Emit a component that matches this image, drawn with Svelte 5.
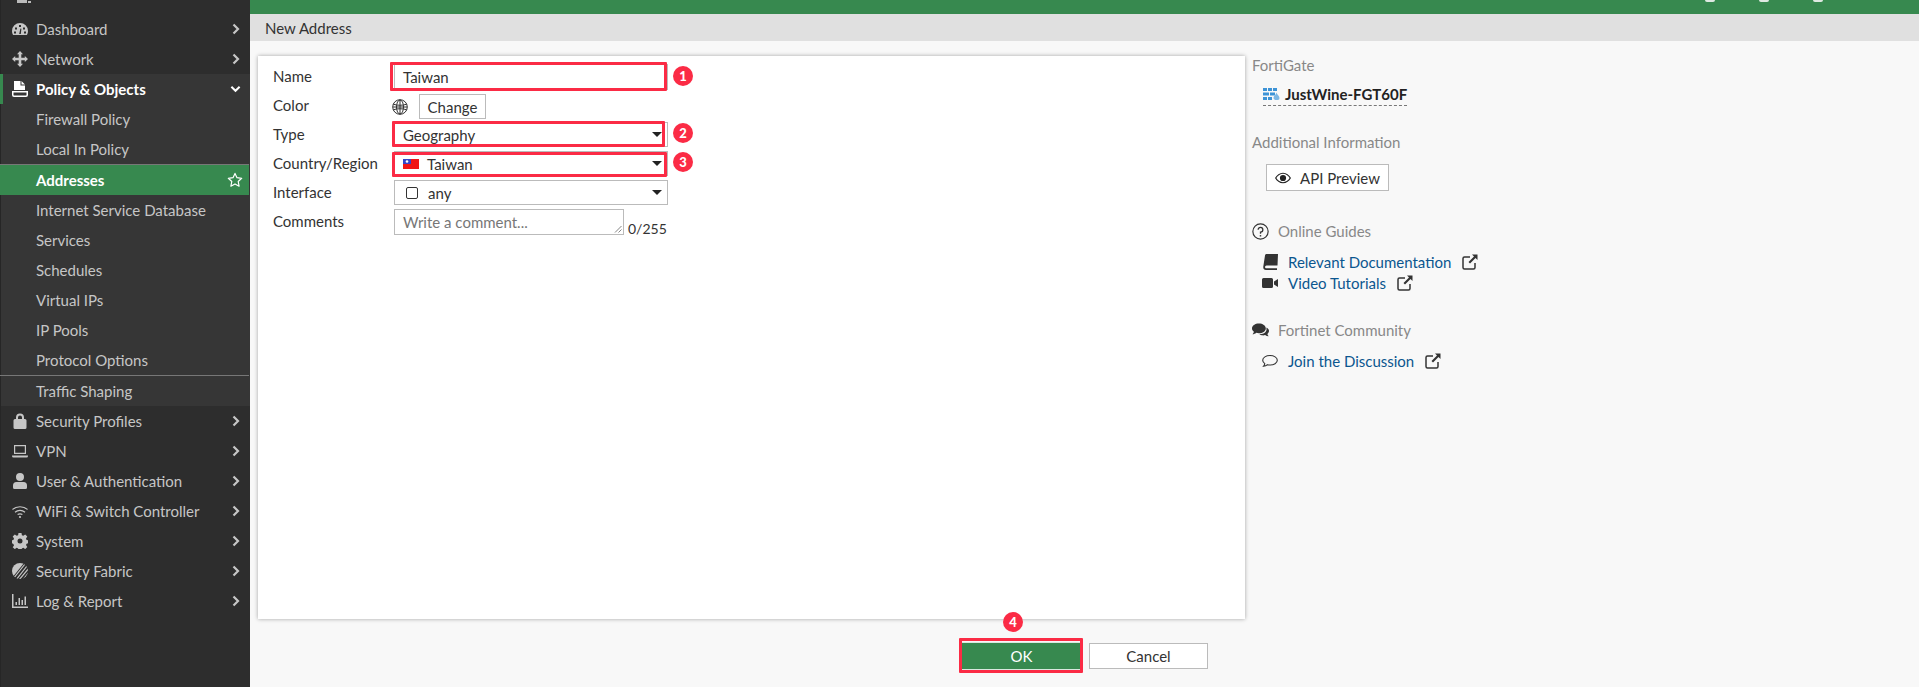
<script lang="ts">
  const icons: Record<string, string> = {
    dashboard: "M8 2a8 8 0 0 0-8 8c0 1.600.5 3 1.200 4h13.600c.7-1 1.200-2.400 1.200-4a8 8 0 0 0-8-8zM7 4h2v2H7zM3 6.500h2v2H3zM2 10.500h2v2H2zM12 10.500h2v2h-2zM11 6.500h2v2h-2zM7.200 13l1.200-5.500 1 .2L8.800 13z",
    network: "M8 0l3 3.200H9.300v3.500h3.500V5l3.200 3-3.200 3V9.300H9.300v3.500H11L8 16l-3-3.200h1.700V9.300H3.200V11L0 8l3.200-3v1.700h3.500V3.200H5z",
    policy: "M2 0h6.500v4.500H13V9H2zM9.500 0L13 3.500H9.500z M0 10h16v4a2 2 0 0 1-2 2H2a2 2 0 0 1-2-2zM1.500 11.500V14c0 .3.2.5.5.5h12c.3 0 .5-.2.5-.5v-2.500z",
    lock: "M4 6V4.500a4 4 0 0 1 8 0V6h1a1.500 1.500 0 0 1 1.500 1.500v7A1.500 1.500 0 0 1 13 16H3a1.500 1.500 0 0 1-1.500-1.500v-7A1.500 1.500 0 0 1 3 6zM6 6h4V4.500a2 2 0 0 0-4 0z",
    vpn: "M2 2h12v9H2zM3.200 3.200v6.600h9.600V3.200zM0 12.500h16V13a1.500 1.500 0 0 1-1.500 1.500h-13A1.500 1.500 0 0 1 0 13z",
    user: "M8 0a4 4 0 1 1 0 8 4 4 0 0 1 0-8zM4.500 9h7A3.500 3.500 0 0 1 15 12.500V14.500A1.500 1.500 0 0 1 13.500 16h-11A1.500 1.500 0 0 1 1 14.500V12.500A3.500 3.500 0 0 1 4.500 9z",
    gear: "M6.500 0h3l.4 2.200 1.400.6 1.900-1.300 2.100 2.100L14 5.500l.6 1.400 1.400.4v3l-1.400.4-.6 1.400 1.300 1.900-2.100 2.100-1.900-1.300-1.400.6-.4 1.600h-3l-.4-1.600-1.400-.6-1.900 1.300L.7 14.300 2 12.400l-.6-1.400L0 10.300v-3l1.400-.4.6-1.400L.7 3.600l2.100-2.100 1.900 1.300 1.400-.6zM8 5.500a2.500 2.500 0 1 0 0 5 2.500 2.500 0 0 0 0-5z",
    report: "M0 1h1.500v12.500H16V15H0zM3.500 9H5v3H3.500zM6.500 5H8v7H6.500zM9.500 7H11v5H9.500zM12.500 3.500H14V12h-1.500z",
    book: "M4.500 0H16l-.5 11.500H4.500A1.500 1.500 0 0 0 3 13c0 .8.7 1.300 1.500 1.300H15V16H4C2 16 1 14.500 1.300 12.500L3 1.500C3.100.6 3.700 0 4.500 0z",
    video: "M1.500 3h8A1.500 1.500 0 0 1 11 4.500v7A1.500 1.500 0 0 1 9.500 13h-8A1.500 1.500 0 0 1 0 11.500v-7A1.500 1.500 0 0 1 1.500 3zM12 6.500L16 4v8l-4-2.500z",
    chat: "M6.500 1.500C10 1.500 13 3.500 13 6s-3 4.500-6.500 4.500c-.9 0-1.700-.1-2.500-.4C3 11 1.800 11.500.5 11.500c.7-.8 1.200-1.600 1.300-2.400C.7 8.300 0 7.200 0 6c0-2.500 3-4.500 6.500-4.500zM14 5.500c1.300.7 2 1.800 2 3 0 1.100-.6 2-1.500 2.800.1.800.6 1.600 1.300 2.200-1.300 0-2.500-.4-3.500-1.200-.9.300-2 .4-3 .2-1-.2-1.800-.5-2.500-1 4 .3 7.800-2 6.700-6z",
  };

  const rows = [
    { label: "Dashboard", icon: "dashboard" },
    { label: "Network", icon: "network" },
  ];
  const subRows = [
    "Firewall Policy",
    "Local In Policy",
    "Addresses",
    "Internet Service Database",
    "Services",
    "Schedules",
    "Virtual IPs",
    "IP Pools",
    "Protocol Options",
    "Traffic Shaping",
  ];
  const lowerRows = [
    { label: "Security Profiles", icon: "lock" },
    { label: "VPN", icon: "vpn" },
    { label: "User & Authentication", icon: "user" },
    { label: "WiFi & Switch Controller", icon: "wifi" },
    { label: "System", icon: "gear" },
    { label: "Security Fabric", icon: "fabric" },
    { label: "Log & Report", icon: "report" },
  ];
</script>

{#snippet chevron()}
  <svg class="chev" viewBox="0 0 8 12" aria-hidden="true"><path d="M1.500 1.500L6 6l-4.500 4.500" fill="none" stroke="currentColor" stroke-width="2.200" /></svg>
{/snippet}

{#snippet navIcon(name: string)}
  {#if name === "wifi"}
    <svg class="nav-icon" viewBox="0 0 16 16" aria-hidden="true">
      <path d="M.5 6.500C4.500 2.800 11.500 2.800 15.500 6.500M3 9.200c2.900-2.500 7.100-2.500 10 0M5.600 11.600c1.500-1 3.300-1 4.800 0" fill="none" stroke="currentColor" stroke-width="1.200" />
      <circle cx="8" cy="14" r="1.100" fill="currentColor" />
    </svg>
  {:else if name === "fabric"}
    <svg class="nav-icon" viewBox="0 0 16 16" aria-hidden="true">
      <clipPath id="fabric-disc"><circle cx="8" cy="8" r="8" /></clipPath>
      <g clip-path="url(#fabric-disc)">
        <path d="M0 0h12L0 15z" fill="currentColor" />
        <path d="M13 1L1 16M15 3L4 17M17 5L7 17M18 8L10 18" fill="none" stroke="currentColor" stroke-width="1.200" />
      </g>
    </svg>
  {:else}
    <svg class="nav-icon" viewBox="0 0 16 16" aria-hidden="true"><path d={icons[name]} fill="currentColor" fill-rule="evenodd" /></svg>
  {/if}
{/snippet}

{#snippet external()}
  <svg class="ext" viewBox="0 0 16 16" aria-hidden="true">
    <path d="M8 3H2.500A1.500 1.500 0 0 0 1 4.500v9A1.500 1.500 0 0 0 2.500 15h9a1.500 1.500 0 0 0 1.500-1.500V9" fill="none" stroke="currentColor" stroke-width="1.500" />
    <path d="M10 0.500h5.500V6L13.500 4 8 9.500 6.500 8 12 2.500z" fill="currentColor" />
  </svg>
{/snippet}

<div class="app">
  <nav class="sidebar">
    <div class="brand">
      <svg class="brand-icon" viewBox="0 0 16 4" aria-hidden="true"><path d="M1 0h10v3H1zM12 1h3v2h-3z" fill="currentColor" /></svg>
    </div>
    {#each rows as row}
      <div class="row">
        {@render navIcon(row.icon)}
        <span>{row.label}</span>
        {@render chevron()}
      </div>
    {/each}
    <div class="group">
      <div class="row open">
        {@render navIcon("policy")}
        <span>Policy &amp; Objects</span>
        <svg class="chev down" viewBox="0 0 12 8" aria-hidden="true"><path d="M1.500 1.500L6 6l4.500-4.500" fill="none" stroke="currentColor" stroke-width="2.200" /></svg>
      </div>
      {#each subRows as label}
        <div class="row sub" class:active={label === "Addresses"} class:after-rule={label === "Traffic Shaping"}>
          <span>{label}</span>
          {#if label === "Addresses"}
            <svg class="star" viewBox="0 0 16 16" aria-hidden="true"><path d="M8 1.400l2 4.300 4.700.6-3.500 3.200.9 4.700L8 11.900l-4.100 2.300.9-4.700L1.300 6.300 6 5.700z" fill="none" stroke="currentColor" stroke-width="1.200" stroke-linejoin="round" /></svg>
          {/if}
        </div>
      {/each}
    </div>
    {#each lowerRows as row}
      <div class="row">
        {@render navIcon(row.icon)}
        <span>{row.label}</span>
        {@render chevron()}
      </div>
    {/each}
  </nav>

  <main class="main">
    <div class="topbar"><i></i><i></i><i></i></div>
    <div class="title">New Address</div>
    <div class="content">
      <section class="card">
        <div class="form">
          <div class="field">
            <span class="label">Name</span>
            <div class="control box text name">Taiwan</div>
            <div class="mark" style="inset: -1px auto auto 117px; width: 277px; height: 29px"></div>
            <span class="badge" style="left: 400px; top: 3px">1</span>
          </div>
          <div class="field">
            <span class="label">Color</span>
            <div class="color-row">
              <svg class="globe" viewBox="0 0 16 16" aria-hidden="true">
                <g fill="none" stroke="#333" stroke-width="1">
                  <circle cx="8" cy="8" r="7.300" />
                  <ellipse cx="8" cy="8" rx="3.500" ry="7" />
                  <path d="M1.200 5.200c4 1.400 9.600 1.400 13.600 0M1.200 10.800c4-1.400 9.600-1.400 13.600 0M8 1v14M1 8h14" />
                </g>
              </svg>
              <button class="btn change">Change</button>
            </div>
          </div>
          <div class="field">
            <span class="label">Type</span>
            <div class="control box select"><span>Geography</span><i class="caret"></i></div>
            <div class="mark" style="inset: 0 auto auto 119px; width: 273px; height: 26px"></div>
            <span class="badge" style="left: 400px; top: 2px">2</span>
          </div>
          <div class="field">
            <span class="label">Country/Region</span>
            <div class="control box select">
              <svg class="flag" viewBox="0 0 16 10" aria-hidden="true">
                <rect width="16" height="10" fill="#f01515" />
                <rect width="8" height="5" fill="#3346c9" />
                <circle cx="4" cy="2.500" r="1.300" fill="#fff" />
              </svg>
              <span>Taiwan</span><i class="caret"></i>
            </div>
            <div class="mark" style="inset: 2px auto auto 119px; width: 275px; height: 25px"></div>
            <span class="badge" style="left: 400px; top: 2px">3</span>
          </div>
          <div class="field">
            <span class="label">Interface</span>
            <div class="control box select">
              <i class="check"></i>
              <span>any</span><i class="caret"></i>
            </div>
          </div>
          <div class="field">
            <span class="label">Comments</span>
            <div class="comment-row">
              <div class="textarea">
                Write a comment...
                <svg class="grip" viewBox="0 0 8 8" aria-hidden="true"><path d="M7.500 1L1 7.500M7.500 4.500L4.500 7.500" fill="none" stroke="#666" stroke-width="0.800" /></svg>
              </div>
              <span class="count">0/255</span>
            </div>
          </div>
        </div>
      </section>

      <aside class="aside">
        <h4 class="first">FortiGate</h4>
        <div class="device">
          <span class="device-name">
            <svg class="device-icon" viewBox="0 0 17 12" aria-hidden="true">
              <path d="M0 0h4v3H0zM5 0h4v3H5zM10 0h4v3h-4zM0 4.500h6v3H0zM7 4.500h5v3H7zM0 9h4v3H0zM5 9h4v3H5z" fill="#3d93d6" />
              <path d="M13.500 4.500c.5 2 3 3.500 3 5.500s-1.300 2-3 2-3-.6-3-2.300c0-1.700 2.700-3 3-5.200z" fill="#7db7e4" />
            </svg>
            JustWine-FGT60F
          </span>
        </div>
        <h4 class="info">Additional Information</h4>
        <button class="btn api">
          <svg class="eye" viewBox="0 0 18 12" aria-hidden="true">
            <path fill-rule="evenodd" d="M9 0c3.800 0 7 2.500 9 6-2 3.500-5.200 6-9 6s-7-2.500-9-6c2-3.500 5.200-6 9-6zM9 1.300C6 1.300 3.300 3.200 1.500 6 3.300 8.800 6 10.700 9 10.700s5.700-1.900 7.500-4.700C14.700 3.200 12 1.300 9 1.300zM9 2.500a3.500 3.500 0 1 1 0 7 3.500 3.500 0 0 1 0-7z" fill="#222" />
          </svg>
          API Preview
        </button>
        <h4 class="guides">
          <svg class="head-icon" viewBox="0 0 16 16" aria-hidden="true">
            <circle cx="8" cy="8" r="7.200" fill="none" stroke="#333" stroke-width="1.100" />
            <path d="M5.800 6.300A2.200 2.200 0 1 1 8 8.500V10" fill="none" stroke="#333" stroke-width="1.200" />
            <circle cx="8" cy="12" r="0.800" fill="#333" />
          </svg>
          Online Guides
        </h4>
        <div class="links">
          <a href="#doc">
            <svg class="link-icon" viewBox="0 0 16 16" aria-hidden="true"><path d={icons.book} fill="#333" /></svg>
            <span>Relevant Documentation</span>
            {@render external()}
          </a>
          <a href="#video">
            <svg class="link-icon" viewBox="0 0 16 16" aria-hidden="true"><path d={icons.video} fill="#333" /></svg>
            <span>Video Tutorials</span>
            {@render external()}
          </a>
        </div>
        <h4 class="community">
          <svg class="head-icon" viewBox="0 0 16 16" aria-hidden="true"><path d={icons.chat} fill="#333" /></svg>
          Fortinet Community
        </h4>
        <div class="links">
          <a href="#join">
            <svg class="link-icon" viewBox="0 0 16 16" aria-hidden="true">
              <path d="M8 2.500c3.900 0 7.300 2 7.300 4.800S11.900 12 8 12c-.9 0-1.700-.1-2.500-.3-1 .9-2.500 1.500-4 1.600.8-.9 1.300-1.700 1.300-2.700C1.500 9.800.7 8.600.7 7.300.7 4.500 4.100 2.500 8 2.500z" fill="none" stroke="#333" stroke-width="1.100" />
            </svg>
            <span>Join the Discussion</span>
            {@render external()}
          </a>
        </div>
      </aside>
    </div>
    <footer class="footer">
      <div class="buttons">
        <button class="btn ok">OK</button>
        <button class="btn cancel">Cancel</button>
        <div class="mark" style="inset: -4px auto auto -3px; width: 124px; height: 35px"></div>
        <span class="badge" style="left: 41px; top: -30px">4</span>
      </div>
    </footer>
  </main>
</div>

<style>
  :global(body) {
    margin: 0;
    overflow: hidden;
    background: #f8f8f8;
  }

  .app {
    display: grid;
    grid-template-columns: 250px 1fr;
    height: 687px;
    overflow: hidden;
    font-family: Lato, "Open Sans", sans-serif;
    font-size: 15px;
    color: #333;
  }

  .sidebar {
    background: #2d2d2d;
    color: #c6c6c6;
    border-left: 1px solid #262626;
    box-sizing: border-box;
  }

  .brand {
    height: 14px;
    padding-left: 15px;
    overflow: hidden;
    color: #bbb;
  }

  .brand-icon {
    display: block;
    width: 16px;
    height: 4px;
  }

  .row {
    display: flex;
    align-items: center;
    height: 30px;
    padding: 0 10px 0 11px;
    line-height: 29px;
  }

  .row span {
    flex: 1;
    margin-left: 8px;
  }

  .nav-icon {
    width: 16px;
    height: 16px;
  }

  .chev {
    width: 8px;
    height: 12px;
  }

  .chev.down {
    width: 11px;
    height: 8px;
    margin-right: -1px;
  }

  .group {
    background: #363636;
  }

  .row.open {
    margin-left: -1px;
    padding-left: 9px;
    border-left: 3px solid #37894f;
    color: #fff;
    font-weight: 700;
  }

  .row.sub {
    padding-left: 36px;
    margin-left: -1px;
  }

  .row.sub span {
    margin-left: 0;
  }

  .row.active {
    height: 31px;
    margin-right: 1px;
    padding-right: 6px;
    border-top: 1px solid #777;
    box-sizing: border-box;
    background: #37894f;
    color: #fff;
    font-weight: 700;
  }

  .star {
    width: 16px;
    height: 16px;
  }

  .row.after-rule {
    height: 31px;
    box-sizing: border-box;
    border-top: 1px solid #777;
    margin-right: 1px;
  }

  .main {
    display: flex;
    flex-direction: column;
    min-width: 0;
  }

  .topbar {
    display: flex;
    justify-content: flex-end;
    gap: 44px;
    height: 14px;
    padding-right: 96px;
    background: #37894f;
  }

  .topbar i {
    width: 10px;
    height: 2px;
    border-radius: 0 0 5px 5px;
    background: #dfe9e2;
  }

  .title {
    height: 27px;
    padding-left: 15px;
    background: #e0e0e0;
    line-height: 28px;
    color: #333;
  }

  .content {
    display: flex;
    flex: 1;
    gap: 7px;
    padding: 15px 0 0 8px;
  }

  .card {
    width: 987px;
    height: 563px;
    box-sizing: border-box;
    padding: 7px 15px;
    background: #fff;
    box-shadow: 0 0 4px rgba(0, 0, 0, 0.35);
  }

  .form {
    display: flex;
    flex-direction: column;
  }

  .field {
    position: relative;
    display: grid;
    grid-template-columns: 121px 274px;
    height: 29px;
  }

  .label {
    line-height: 26px;
  }

  .control {
    display: flex;
    align-items: center;
    box-sizing: border-box;
    height: 25px;
    margin-top: 1px;
    padding: 0 5px 0 8px;
    background: #fff;
  }

  .control.name {
    height: 26px;
  }

  .box {
    border: 1px solid #bbb;
  }

  .select span {
    flex: 1;
  }

  .caret {
    width: 0;
    height: 0;
    border-left: 5px solid transparent;
    border-right: 5px solid transparent;
    border-top: 5px solid #222;
  }

  .flag {
    width: 16px;
    height: 10px;
    margin-right: 8px;
  }

  .check {
    width: 10px;
    height: 10px;
    margin: 0 10px 0 3px;
    border: 1.500px solid #333;
    border-radius: 2px;
  }

  .color-row {
    display: flex;
    align-items: center;
    gap: 11px;
    margin-left: -2px;
  }

  .globe {
    width: 16px;
    height: 16px;
  }

  .btn {
    box-sizing: border-box;
    padding: 0;
    border: 1px solid #bbb;
    background: #fff;
    color: #333;
    font: inherit;
  }

  .change {
    width: 67px;
    height: 25px;
  }

  .comment-row {
    display: flex;
    align-items: flex-start;
    gap: 4px;
    margin-top: 1px;
  }

  .textarea {
    position: relative;
    flex: none;
    box-sizing: border-box;
    width: 230px;
    height: 26px;
    padding: 0 8px;
    border: 1px solid #bbb;
    color: #777;
    line-height: 24px;
  }

  .grip {
    position: absolute;
    right: 1px;
    bottom: 1px;
    width: 8px;
    height: 8px;
  }

  .count {
    margin-top: 11px;
    font-size: 14px;
    line-height: 18px;
  }

  .mark {
    position: absolute;
    box-sizing: border-box;
    border: 3px solid #fb2b45;
    border-radius: 1px;
    pointer-events: none;
  }

  .badge {
    position: absolute;
    width: 20px;
    height: 20px;
    border-radius: 50%;
    background: #fb2b45;
    color: #fff;
    font-size: 13px;
    font-weight: 900;
    line-height: 20px;
    text-align: center;
  }

  .aside {
    display: flex;
    flex-direction: column;
    align-items: flex-start;
    color: #333;
  }

  .aside h4 {
    display: flex;
    align-items: center;
    gap: 10px;
    margin: 0;
    color: #888;
    font-size: 15px;
    font-weight: 400;
    line-height: 20px;
  }

  .aside h4.first {
    margin-top: -1px;
  }

  .device {
    margin: 10px 0 0 11px;
  }

  .device-name {
    display: flex;
    align-items: center;
    gap: 5px;
    padding-bottom: 2px;
    border-bottom: 1px dashed #777;
    color: #222;
    font-weight: 700;
    line-height: 18px;
  }

  .device-icon {
    width: 17px;
    height: 12px;
  }

  .aside h4.info {
    margin-top: 26px;
  }

  .api {
    display: flex;
    align-items: center;
    justify-content: center;
    gap: 9px;
    width: 123px;
    height: 27px;
    margin: 12px 0 0 14px;
  }

  .eye {
    width: 16px;
    height: 12px;
  }

  .aside h4.guides {
    margin-top: 30px;
  }

  .head-icon {
    width: 17px;
    height: 17px;
    margin-right: -1px;
  }

  .links {
    display: flex;
    flex-direction: column;
    margin: 10px 0 0 10px;
  }

  .links a {
    display: flex;
    align-items: center;
    gap: 10px;
    height: 21px;
    color: #0b568f;
    text-decoration: none;
  }

  .links a span {
    margin-right: 1px;
  }

  .link-icon {
    width: 16px;
    height: 16px;
  }

  .ext {
    width: 16px;
    height: 16px;
    color: #333;
  }

  .aside h4.community {
    margin-top: 27px;
  }

  .footer {
    display: flex;
    height: 68px;
    padding-left: 712px;
  }

  .buttons {
    position: relative;
    display: flex;
    align-items: flex-start;
    gap: 8px;
    height: 28px;
    margin-top: 23px;
  }

  .ok {
    width: 119px;
    height: 28px;
    border: 0;
    border-top: 1px solid #d9e8de;
    border-bottom: 1px solid #d9e8de;
    background: #37894f;
    color: #fff;
  }

  .cancel {
    width: 119px;
    height: 26px;
    margin-top: 1px;
  }
</style>
